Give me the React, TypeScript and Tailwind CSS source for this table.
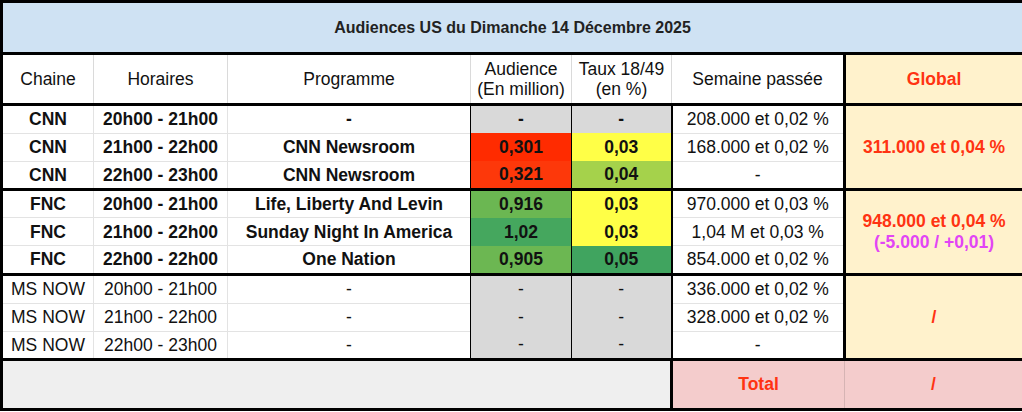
import type { ReactNode } from "react";

type Row = {
  chaine: string;
  horaire: string;
  programme: string;
  audience: string;
  audienceBg: string;
  taux: string;
  tauxBg: string;
  semaine: string;
};

type Group = {
  bold: boolean;
  rows: Row[];
  global: ReactNode;
};

const GRAY = "bg-[#d9d9d9]";

const groups: Group[] = [
  {
    bold: true,
    rows: [
      { chaine: "CNN", horaire: "20h00 - 21h00", programme: "-", audience: "-", audienceBg: GRAY, taux: "-", tauxBg: GRAY, semaine: "208.000 et 0,02 %" },
      { chaine: "CNN", horaire: "21h00 - 22h00", programme: "CNN Newsroom", audience: "0,301", audienceBg: "bg-[#ff2b00]", taux: "0,03", tauxBg: "bg-[#ffff47]", semaine: "168.000 et 0,02 %" },
      { chaine: "CNN", horaire: "22h00 - 23h00", programme: "CNN Newsroom", audience: "0,321", audienceBg: "bg-[#fd380a]", taux: "0,04", tauxBg: "bg-[#a5d24b]", semaine: "-" },
    ],
    global: <span className="text-[#ff3312]">311.000 et 0,04 %</span>,
  },
  {
    bold: true,
    rows: [
      { chaine: "FNC", horaire: "20h00 - 21h00", programme: "Life, Liberty And Levin", audience: "0,916", audienceBg: "bg-[#6bb752]", taux: "0,03", tauxBg: "bg-[#ffff47]", semaine: "970.000 et 0,03 %" },
      { chaine: "FNC", horaire: "21h00 - 22h00", programme: "Sunday Night In America", audience: "1,02", audienceBg: "bg-[#45a75e]", taux: "0,03", tauxBg: "bg-[#ffff47]", semaine: "1,04 M et 0,03 %" },
      { chaine: "FNC", horaire: "22h00 - 22h00", programme: "One Nation", audience: "0,905", audienceBg: "bg-[#6cb752]", taux: "0,05", tauxBg: "bg-[#40a45f]", semaine: "854.000 et 0,02 %" },
    ],
    global: (
      <div className="leading-[21px]">
        <div className="text-[#ff3312]">948.000 et 0,04 %</div>
        <div className="text-[#e245f5]">(-5.000 / +0,01)</div>
      </div>
    ),
  },
  {
    bold: false,
    rows: [
      { chaine: "MS NOW", horaire: "20h00 - 21h00", programme: "-", audience: "-", audienceBg: GRAY, taux: "-", tauxBg: GRAY, semaine: "336.000 et 0,02 %" },
      { chaine: "MS NOW", horaire: "21h00 - 22h00", programme: "-", audience: "-", audienceBg: GRAY, taux: "-", tauxBg: GRAY, semaine: "328.000 et 0,02 %" },
      { chaine: "MS NOW", horaire: "22h00 - 23h00", programme: "-", audience: "-", audienceBg: GRAY, taux: "-", tauxBg: GRAY, semaine: "-" },
    ],
    global: <span className="text-[#ff3312]">/</span>,
  },
];

export default function App() {
  return (
    <div className="w-[1022px] h-[412px] bg-white font-['Liberation_Sans',Arial,sans-serif] text-[17.5px] text-[#111]">
      <table className="w-[1022px] table-fixed border-collapse border-[3px] border-black">
        <colgroup>
          <col className="w-[92px]" />
          <col className="w-[134px]" />
          <col className="w-[243px]" />
          <col className="w-[101px]" />
          <col className="w-[100px]" />
          <col className="w-[173px]" />
          <col className="w-[179px]" />
        </colgroup>
        <tbody>
          <tr>
            <td
              colSpan={7}
              className="h-[52px] bg-[#cfe2f3] border-b-[3px] border-black p-0 text-center align-middle text-[16px] font-bold text-[#222]"
            >
              Audiences US du Dimanche 14 Décembre 2025
            </td>
          </tr>

          <tr className="leading-[20px]">
            <td className="h-[51px] border-r border-[#dadada] p-0 text-center align-middle">Chaine</td>
            <td className="border-r border-[#dadada] p-0 text-center align-middle">Horaires</td>
            <td className="border-r border-[#dadada] p-0 text-center align-middle">Programme</td>
            <td className="border-r border-[#dadada] p-0 text-center align-middle">
              Audience
              <br />
              (En million)
            </td>
            <td className="border-r border-[#dadada] p-0 text-center align-middle">
              Taux 18/49
              <br />
              (en %)
            </td>
            <td className="p-0 text-center align-middle">Semaine passée</td>
            <td className="border-l-[3px] border-black bg-[#fff2cc] p-0 text-center align-middle font-bold text-[#ff3312]">
              Global
            </td>
          </tr>

          {groups.map((group, gi) =>
            group.rows.map((row, ri) => {
              const first = ri === 0;
              const top = first ? "border-t-[3px] border-t-black" : "border-t border-t-[#e3e3e3]";
              const colorTop = first ? "border-t-[3px] border-t-black" : "";
              const weight = group.bold ? "font-bold" : "";
              const height = first ? (gi === 2 ? "h-[29px]" : "h-[28.5px]") : "h-[28px]";
              return (
                <tr key={`${gi}-${ri}`}>
                  <td className={`${height} p-0 text-center align-middle border-r border-r-[#e3e3e3] ${top} ${weight}`}>
                    {row.chaine}
                  </td>
                  <td className={`p-0 text-center align-middle border-r border-r-[#e3e3e3] ${top} ${weight}`}>
                    {row.horaire}
                  </td>
                  <td className={`p-0 text-center align-middle ${top} ${weight}`}>{row.programme}</td>
                  <td className={`p-0 text-center align-middle border-x border-x-black ${colorTop} ${row.audienceBg} ${weight}`}>
                    {row.audience}
                  </td>
                  <td className={`p-0 text-center align-middle border-r-2 border-r-black ${colorTop} ${row.tauxBg} ${weight}`}>
                    {row.taux}
                  </td>
                  <td className={`p-0 text-center align-middle ${top}`}>{row.semaine}</td>
                  {first && (
                    <td
                      rowSpan={3}
                      className="p-0 text-center align-middle border-l-[3px] border-t-[3px] border-black bg-[#fff2cc] font-bold"
                    >
                      {group.global}
                    </td>
                  )}
                </tr>
              );
            })
          )}

          <tr>
            <td colSpan={5} className="h-[50px] p-0 bg-[#efefef] border-t-[3px] border-black" />
            <td className="p-0 text-center align-middle bg-[#f4cccc] border-t-[3px] border-l-[3px] border-black font-bold text-[#ff3312]">
              Total
            </td>
            <td className="p-0 text-center align-middle bg-[#f4cccc] border-t-[3px] border-t-black border-l border-l-[#d6b4b4] font-bold text-[#ff3312]">
              /
            </td>
          </tr>
        </tbody>
      </table>
    </div>
  );
}
